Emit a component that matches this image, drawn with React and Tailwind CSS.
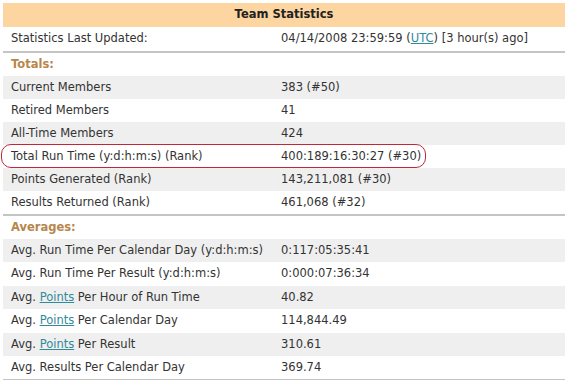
import React from "react";

const Link = ({ children }) => (
  <span className="text-[#2f8a9c] underline">{children}</span>
);

const Row = ({ label, value, gray, circled, h = "h-[23px]" }) => (
  <div className={`relative grid grid-cols-[270px_1fr] ${h} items-center ${gray ? "bg-[#efefef]" : "bg-white"}`}>
    <div className="pl-[8px] whitespace-nowrap">{label}</div>
    <div className="pl-[8px] whitespace-nowrap">{value}</div>
    {circled && (
      <div className="absolute left-[-2px] top-[-1px] w-[425px] h-[24px] rounded-[10px] border border-[#c0283a]" />
    )}
  </div>
);

const Heading = ({ children }) => (
  <div className="h-[23px] flex items-center pl-[8px] font-bold text-[#b8864b]">{children}</div>
);

export default function App() {
  return (
    <div className="w-[569px] h-[380px] bg-white overflow-hidden">
      <div className="ml-[3px] w-[562px] pt-[3px] text-[11.5px] text-[#333] [font-family:'DejaVu_Sans',Verdana,sans-serif]">
        <div className="h-[24px] bg-[#fcd5a0] flex items-center justify-center font-bold text-[#222]">
          Team Statistics
        </div>
        <Row
          h="h-[24px]"
          label="Statistics Last Updated:"
          value={<>04/14/2008 23:59:59 (<Link>UTC</Link>) [3 hour(s) ago]</>}
        />
        <div className="h-[2px] bg-[#c4c4c4]" />
        <Heading>Totals:</Heading>
        <Row label="Current Members" value="383 (#50)" gray />
        <Row label="Retired Members" value="41" />
        <Row label="All-Time Members" value="424" gray />
        <Row label="Total Run Time (y:d:h:m:s) (Rank)" value="400:189:16:30:27 (#30)" circled />
        <Row label="Points Generated (Rank)" value="143,211,081 (#30)" gray />
        <Row label="Results Returned (Rank)" value="461,068 (#32)" />
        <div className="h-[2px] bg-[#c4c4c4]" />
        <Heading>Averages:</Heading>
        <Row label="Avg. Run Time Per Calendar Day (y:d:h:m:s)" value="0:117:05:35:41" gray />
        <Row h="h-[24px]" label="Avg. Run Time Per Result (y:d:h:m:s)" value="0:000:07:36:34" />
        <Row label={<>Avg. <Link>Points</Link> Per Hour of Run Time</>} value="40.82" gray />
        <Row h="h-[24px]" label={<>Avg. <Link>Points</Link> Per Calendar Day</>} value="114,844.49" />
        <Row label={<>Avg. <Link>Points</Link> Per Result</>} value="310.61" gray />
        <Row label="Avg. Results Per Calendar Day" value="369.74" />
        <div className="h-[2px] bg-[#c4c4c4]" />
      </div>
    </div>
  );
}
